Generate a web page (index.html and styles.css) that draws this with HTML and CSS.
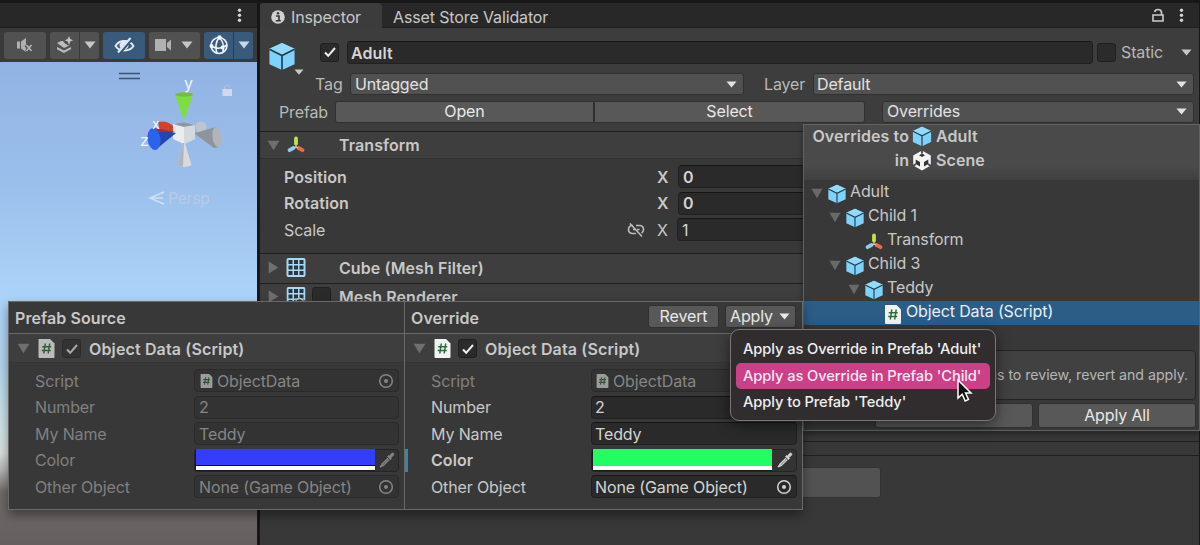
FILE: index.html
```html
<!DOCTYPE html>
<html lang="en">
<head>
<meta charset="utf-8">
<title>Inspector</title>
<link rel="stylesheet" href="styles.css">
</head>
<body>
<svg class="defs" aria-hidden="true">
  <symbol id="cube" viewBox="0 0 28 30">
    <path d="M14 1 27 7v16L14 29 1 23V7z" fill="#7fd2fb"/>
    <path d="M14 1 27 7 14 13.500 1 7z" fill="#93dbfd"/>
    <path d="M1 7.500 14 14l13-6.500M14 14v15" fill="none" stroke="#263c48" stroke-width="1.700"/>
  </symbol>
  <symbol id="axes" viewBox="0 0 18 18">
    <g stroke-width="3.800" stroke-linecap="round"><path d="M9 2.500v5" stroke="#bfe34f"/><path d="M6.500 12 2.500 14.200" stroke="#8fcbef"/><path d="m11.500 12 4 2.200" stroke="#ea6a45"/></g>
    <path d="M9 9v2M9 11l-2 1M9 11l2 1" stroke="#e8e0c0" stroke-width="1"/>
  </symbol>
  <symbol id="script" viewBox="0 0 17 19">
    <path d="M1 0h11l4.500 4.500V18q0 1-1 1h-14Q.5 19 .5 18V1q0-1 .5-1z" fill="#f1f4f2"/>
    <path d="M7.300 4.500 5.800 14.500M11.700 4.500l-1.500 10M4.200 7.700h9M3.700 11.400h9" stroke="#2d6b3c" stroke-width="1.500" fill="none"/>
  </symbol>
  <symbol id="down" viewBox="0 0 12 8" preserveAspectRatio="none"><path d="M.5.500h11L6 7.500z" fill="currentColor"/></symbol>
  <symbol id="check" viewBox="0 0 14 12"><path d="m2 6.500 3.200 3.300L12 2" fill="none" stroke="currentColor" stroke-width="2"/></symbol>
  <symbol id="target" viewBox="0 0 16 16"><circle cx="8" cy="8" r="6.300" fill="none" stroke="currentColor" stroke-width="1.500"/><circle cx="8" cy="8" r="2" fill="currentColor"/></symbol>
  <symbol id="picker" viewBox="0 0 16 16">
    <path d="m8.500 4.500 1-1 .8.800 2-2.500q1-1.300 2.200-.4.900 1.100-.3 2.200l-2.400 2 .8.900-1.100 1.100z" fill="currentColor" stroke="currentColor" stroke-width=".8"/>
    <path d="m9 6.200-6 6-.7 2 2-.8 6-6" fill="none" stroke="currentColor" stroke-width="1.400"/><path d="m1 15 2-2" stroke="currentColor" stroke-width="1.500"/>
  </symbol>
  <symbol id="grid" viewBox="0 0 19 19">
    <rect width="19" height="19" rx="2" fill="#a9d9f2"/>
    <g fill="#263640"><path d="M2 2h4v4H2zM7.500 2h4v4h-4zM13 2h4v4h-4zM2 7.500h4v4H2zM7.500 7.500h4v4h-4zM13 7.500h4v4h-4zM2 13h4v4H2zM7.500 13h4v4h-4zM13 13h4v4h-4z"/></g>
  </symbol>
  <symbol id="dots" viewBox="0 0 5 15"><g fill="#d2d2d2"><circle cx="2.500" cy="2.300" r="1.700"/><circle cx="2.500" cy="7.300" r="1.700"/><circle cx="2.500" cy="12.300" r="1.700"/></g></symbol>
</svg>

<div class="editor">
  <section class="scene">
    <div class="scene-tabs"><svg width="5" height="15"><use href="#dots"/></svg></div>
    <div class="toolbar">
      <span class="tool w-audio"><svg width="18" height="16" viewBox="0 0 18 16"><path d="M1 4.500h3v7H1zM5 4.500l5-3.500v14l-5-3.500z" fill="#b0b0b0"/><path d="m10 8 6 7M16.500 8l-6 7" stroke="#4f4f4f" stroke-width="3.500"/><path d="m10.500 8 5 6M15.500 8l-5 6" stroke="#b5b5b5" stroke-width="1.600"/></svg></span>
      <span class="split w-fx"><span class="tool"><svg width="18" height="18" viewBox="0 0 18 18"><path d="M13 0l1.200 3 3 1.300-3 1.200L13 9l-1.300-3.500-3-1.200 3-1.300z" fill="#c4c4c4"/><path d="m1 7 4-2h2l1.500 2L12 9.500l2-.3-6 2.800zM1 11l7 3.500 7-3.500v2L8 17l-7-3.800z" fill="#bdbdbd"/></svg></span><span class="tool arrow"><svg width="12" height="8"><use href="#down"/></svg></span></span>
      <span class="tool on w-eye"><svg width="21" height="17" viewBox="0 0 21 17"><path d="M1.500 9q3-5 9-5t9 5q-3 4.500-9 4.500t-9-4.500z" fill="none" stroke="#e3edf7" stroke-width="1.800"/><ellipse cx="10" cy="8.500" rx="4.500" ry="4" fill="#e3edf7"/><path d="m5 16 13-15" stroke="#3a5878" stroke-width="4"/><path d="M4 15.500 16.500 1" stroke="#e3edf7" stroke-width="2"/></svg></span>
      <span class="tool w-cam"><svg width="17" height="12" viewBox="0 0 17 12"><path d="M0 0h11v12H0zM12 4l4-3.500v11L12 8z" fill="#b0b0b0"/></svg><svg class="gap" width="12" height="8"><use href="#down"/></svg></span>
      <span class="split w-gizmo"><span class="tool on"><svg width="20" height="20" viewBox="0 0 20 20"><g fill="none" stroke="#e8f2fb" stroke-width="1.600"><circle cx="10" cy="10.500" r="8"/><path d="M10 2.500q-5 7-2 16M10 2.500q6 5 4 14.500M2 11q8 5 16-1"/></g><g fill="#eef6fd"><circle cx="10.500" cy="2.500" r="2.200"/><circle cx="2.500" cy="11" r="2"/><circle cx="13.500" cy="12.500" r="2"/></g></svg></span><span class="tool on arrow"><svg width="12" height="8"><use href="#down"/></svg></span></span>
    </div>
    <div class="viewport">
      <svg width="257" height="240" viewBox="0 62 257 240" class="gizmo">
        <path d="M119 73.500h21M119 78.500h21" stroke="#3f5270" stroke-width="1.300"/>
        <path d="M224.500 89v-2q0-1.500 3-1.500 2.500 0 2.500 1.500" stroke="#b3c3dc" fill="none"/><rect x="222.500" y="89" width="9.500" height="7" fill="#dee4ed" opacity=".8"/>
        <path d="M158 122q9-2 15 4v8l-12 2z" fill="#d44129"/>
        <circle cx="201" cy="127" r="5.500" fill="#bfc5ce"/>
        <path d="m173 124 11-2 11 3v14l-11 5-11-5z" fill="#ebecee"/><path d="m184 127 11-2v14l-11 5z" fill="#d5d8dd"/><path d="m173 124 11-2 11 3-11 2z" fill="#8e97a5"/>
        <path d="M175 94q9-4 18 0l-8 24h-2z" fill="#7ddf3e"/><ellipse cx="184" cy="94.500" rx="9" ry="2" fill="#79b84a"/>
        <path d="M183 143h2l6.500 22q-7 4-14.500 0z" fill="#d8dadd"/><path d="M183 143h1l-1 24q-4 0-6-2z" fill="#afb5bf"/>
        <path d="M195 133l21-6q7 8 3 20l-5 1-19-14z" fill="#8e9499"/><ellipse cx="217" cy="137" rx="4.500" ry="10" transform="rotate(-8 217 137)" fill="#b0b5b9"/>
        <path d="M176 133l-23-5-1 21 4 .5z" fill="#2046b5"/><path d="M176 132l-22-4 3 4z" fill="#a92a35"/><ellipse cx="154" cy="139" rx="6.500" ry="11" transform="rotate(-8 154 139)" fill="#2c63ea"/>
        <path d="m164 192-14 6 14 6M151 198h12" stroke="#cfe0f4" stroke-width="1.500" fill="none"/>
        <g class="axis"><text x="184" y="88.500">y</text><text x="152" y="129">x</text><text x="140" y="146">z</text></g>
        <text x="168" y="203.500" class="persp">Persp</text>
      </svg>
    </div>
  </section>

  <section class="inspector">
    <div class="tabs">
      <div class="tab active"><svg width="14" height="14" viewBox="0 0 14 14"><circle cx="7" cy="7" r="6.800" fill="#d0d0d0"/><path d="M5 6h3v4.500M4.800 10.800h5" stroke="#333" stroke-width="1.600" fill="none"/><circle cx="7" cy="3.300" r="1.200" fill="#333"/></svg><span>Inspector</span></div>
      <div class="tab second"><span>Asset Store Validator</span></div>
      <div class="tab-tools"><svg width="12" height="14" viewBox="0 0 12 14"><path d="M1 7h10v6H1zM9.500 7V4Q9 1.500 6 1.500T2.800 4" fill="none" stroke="#ccc" stroke-width="1.600"/></svg><svg width="5" height="15"><use href="#dots"/></svg></div>
    </div>
    <div class="object-head">
      <div class="row name-row"><div class="icon-cell"><svg class="bigcube" width="28" height="29"><use href="#cube"/></svg><svg class="cubearrow" width="10" height="6"><use href="#down"/></svg></div><span class="checkbox"><svg width="14" height="12"><use href="#check"/></svg></span><div class="field name"><b>Adult</b></div><span class="checkbox empty"></span><span class="static">Static</span><svg width="11" height="7"><use href="#down"/></svg></div>
      <div class="row tag-row"><span class="label">Tag</span><div class="dropdown tag"><span>Untagged</span><svg width="11" height="7"><use href="#down"/></svg></div><span class="label layer">Layer</span><div class="dropdown grow"><span>Default</span><svg width="11" height="7"><use href="#down"/></svg></div></div>
      <div class="row prefab-row"><span class="label">Prefab</span><div class="button open">Open</div><div class="button select">Select</div><div class="dropdown overrides"><span>Overrides</span><svg width="11" height="7"><use href="#down"/></svg></div></div>
    </div>
    <div class="comp-head first"><svg class="fold" width="13" height="11"><use href="#down"/></svg><svg class="cicon" width="20" height="18"><use href="#axes"/></svg><b class="ctitle">Transform</b></div>
    <div class="comp-body">
      <div class="prop"><b class="pl">Position</b><span class="link"></span><b class="x">X</b><div class="field"><b>0</b></div></div>
      <div class="prop"><b class="pl">Rotation</b><span class="link"></span><b class="x">X</b><div class="field"><b>0</b></div></div>
      <div class="prop"><span class="pl">Scale</span><span class="link"><svg width="18" height="14" viewBox="0 0 18 14"><path d="M6 2.500H5Q1.500 3 1.500 6.500T5 10.500h4M9 2.500h4q3.500.500 3.500 4 0 2.500-2 3.500M6 6.500h2M10 6.500h2.500M3 .5l12 13" fill="none" stroke="#bdbdbd" stroke-width="1.600"/></svg></span><span class="x">X</span><div class="field scale">1</div></div>
    </div>
    <div class="comp-head mf"><svg class="fold side" width="13" height="11"><use href="#down"/></svg><svg class="cicon" width="19" height="19"><use href="#grid"/></svg><b class="ctitle">Cube (Mesh Filter)</b></div>
    <div class="comp-head last"><svg class="fold side" width="13" height="11"><use href="#down"/></svg><svg class="cicon" width="19" height="19" viewBox="0 0 19 19"><use href="#grid"/><path d="M8 14q5-6 11 0l-2 5H9z" fill="#333"/><path d="M9 13.500q4-4 8 0" stroke="#c8c8c8" stroke-width="1.600" fill="none"/></svg><span class="checkbox mr"></span><b class="ctitle mr-title">Mesh Renderer</b></div>
    <div class="strip"></div>
    <div class="add-wrap"><div class="button add"></div></div>
  </section>
</div>

<aside class="overrides-popup">
  <header>
    <div class="oh"><b class="oh-l">Overrides to</b><svg width="20" height="21"><use href="#cube"/></svg><b>Adult</b></div>
    <div class="oh"><b class="oh-l">in</b><svg width="20" height="21" viewBox="0 0 20 21"><path d="M10 .5 18.800 5.500v10L10 20.500l-8.800-5v-10z" fill="#f4f4f4"/><path d="m10 3.500 3 1.800-3 1.800-3-1.800zM3.700 9.500l4.300 2.400v4.600L3.700 14zM16.300 9.500 12 11.900v4.600l4.300-2.500z" fill="#343434"/><path d="M10 0v3.500M1 16l3-2M19 16l-3-2" stroke="#484848" stroke-width="1.800"/></svg><b>Scene</b></div>
  </header>
  <div class="tree">
    <div class="node d0"><svg class="tw" width="12" height="11"><use href="#down"/></svg><svg class="ic" width="20" height="20"><use href="#cube"/></svg><span>Adult</span></div>
    <div class="node d1"><svg class="tw" width="12" height="11"><use href="#down"/></svg><svg class="ic" width="20" height="20"><use href="#cube"/></svg><span>Child 1</span></div>
    <div class="node d2"><i class="tw"></i><svg class="ic" width="20" height="18"><use href="#axes"/></svg><span>Transform</span></div>
    <div class="node d1"><svg class="tw" width="12" height="11"><use href="#down"/></svg><svg class="ic" width="20" height="20"><use href="#cube"/></svg><span>Child 3</span></div>
    <div class="node d2"><svg class="tw" width="12" height="11"><use href="#down"/></svg><svg class="ic" width="20" height="20"><use href="#cube"/></svg><span>Teddy</span></div>
    <div class="node d3 selected"><i class="tw"></i><svg class="ic" width="20" height="19"><use href="#script"/></svg><span>Object Data (Script)</span></div>
  </div>
  <div class="help">ns to review, revert and apply.</div>
  <div class="actions"><div class="button"></div><div class="button">Apply All</div></div>
</aside>

<aside class="compare">
  <div class="col source">
    <header><b class="ps">Prefab Source</b></header>
    <div class="ch"><svg class="fold" width="13" height="11"><use href="#down"/></svg><svg class="sc" width="17" height="19"><use href="#script"/></svg><span class="checkbox"><svg width="14" height="12"><use href="#check"/></svg></span><b class="odt">Object Data (Script)</b></div>
    <div class="props">
      <div class="p"><span>Script</span><div class="field obj"><svg width="13" height="14"><use href="#script"/></svg><span class="od">ObjectData</span><svg class="tg" width="16" height="16"><use href="#target"/></svg></div></div>
      <div class="p"><span>Number</span><div class="field">2</div></div>
      <div class="p"><span>My Name</span><div class="field">Teddy</div></div>
      <div class="p"><span>Color</span><div class="field color"><i class="swatch blue"></i><svg width="16" height="16"><use href="#picker"/></svg></div></div>
      <div class="p"><span>Other Object</span><div class="field obj"><span class="none">None (Game Object)</span><svg class="tg" width="16" height="16"><use href="#target"/></svg></div></div>
    </div>
  </div>
  <div class="col target">
    <header><b class="ov">Override</b><div class="button">Revert</div><div class="button apply"><span>Apply</span><svg width="11" height="7"><use href="#down"/></svg></div></header>
    <div class="ch"><svg class="fold" width="13" height="11"><use href="#down"/></svg><svg class="sc" width="17" height="19"><use href="#script"/></svg><span class="checkbox"><svg width="14" height="12"><use href="#check"/></svg></span><b class="odt">Object Data (Script)</b></div>
    <div class="props">
      <div class="p off"><span>Script</span><div class="field obj"><svg width="13" height="14"><use href="#script"/></svg><span class="od">ObjectData</span></div></div>
      <div class="p"><span>Number</span><div class="field">2</div></div>
      <div class="p"><span>My Name</span><div class="field">Teddy</div></div>
      <div class="p changed"><b>Color</b><div class="field color"><i class="swatch green"></i><svg width="16" height="16"><use href="#picker"/></svg></div></div>
      <div class="p"><span>Other Object</span><div class="field obj"><span class="none">None (Game Object)</span><svg class="tg" width="16" height="16"><use href="#target"/></svg></div></div>
    </div>
  </div>
</aside>

<nav class="menu">
  <div class="item">Apply as Override in Prefab 'Adult'</div>
  <div class="item hot">Apply as Override in Prefab 'Child'</div>
  <div class="item">Apply to Prefab 'Teddy'</div>
</nav>
<svg class="cursor" width="18" height="26" viewBox="0 0 18 26"><path d="M2 2v18l4.200-3.800 3 6.800 3.300-1.500-3-6.500H15z" fill="#111" stroke="#fff" stroke-width="1.500"/></svg>
</body>
</html>
```
FILE: styles.css
```css
* { box-sizing: border-box; }
body { margin: 0; width: 1200px; height: 545px; overflow: hidden; position: relative; background: #191919; font: 16px/20px Inter, sans-serif; letter-spacing: -.13px; color: #c8c8c8; white-space: nowrap; }
b { font-weight: 600; letter-spacing: .08px; }
svg { display: block; flex: none; }
.defs { position: absolute; width: 0; height: 0; }
.editor { display: flex; gap: 3px; height: 545px; padding: 3px 2px 0 0; background: #171717; }

/* Scene view */
.scene { width: 257px; display: flex; flex-direction: column; flex: none; }
.scene-tabs { height: 25px; background: #282828; display: flex; justify-content: flex-end; align-items: center; padding-right: 15px; border-bottom: 1px solid #1b1b1b; }
.toolbar { height: 34px; background: #3a3a3a; display: flex; align-items: center; gap: 4px; padding: 0 4px 0 4px; }
.tool { height: 27px; background: #515151; border-radius: 3px; display: flex; align-items: center; justify-content: center; color: #c6c6c6; }
.on { background: #3a5a7c; color: #c8d8ec; }
.split { display: flex; gap: 1px; }
.split .tool:first-child { flex: 1; border-radius: 3px 0 0 3px; }
.arrow { width: 19px; border-radius: 0 3px 3px 0; }
.w-audio { width: 42px; }
.w-fx { width: 49px; }
.w-eye { width: 42px; }
.w-cam { width: 51px; padding-right: 2px; }
.gap { margin-left: 9px; }
.w-gizmo { width: 49px; }
.viewport { flex: 1; background: linear-gradient(#91b3e4, #9bbfeb 25%, #abd3f8 48%, #b2d4ed 63%, #cfe3e7 76%, #d9dedb 81%, #b4b5b4 84.500%, #706a69 89%, #665f5f); }
.axis { fill: #f0f5fa; font: 16px Inter, sans-serif; }
.axis text:nth-child(2) { font-size: 14px; }
.persp { fill: #b9cbe4; font: 15.500px Inter, sans-serif; }

/* Inspector */
.inspector { flex: 1; background: #383838; display: flex; flex-direction: column; }
.tabs { height: 25px; background: #282828; display: flex; border-bottom: 1px solid #202020; }
.tab { display: flex; align-items: center; gap: 6px; padding: 2px 11px 0; }
.tab.active { width: 122px; height: 25px; background: #3c3c3c; border-radius: 4px 4px 0 0; }
.tab.second { padding-top: 3px; }
.tab-tools { margin-left: auto; display: flex; align-items: center; gap: 15px; padding-right: 15px; }
.object-head { height: 103px; background: #3d3d3d; padding: 13px 5px 0 9px; }
.row { display: flex; height: 22px; align-items: center; }
.name-row { padding-right: 4px; margin-right: -2px; }
.icon-cell { width: 51px; height: 22px; display: flex; align-items: flex-start; margin-left: -1px; margin-right: 1px; }
.cubearrow { margin: 28px 0 0 -2px; }
.bigcube { margin-top: 1px; }
.checkbox { width: 19px; height: 19px; background: #2b2b2b; border: 1px solid #202020; border-radius: 3px; display: flex; align-items: center; justify-content: center; color: #eee; flex: none; }
.checkbox.empty { margin-left: 4px; }
.field { height: 23px; background: #2a2a2a; border: 1px solid #202020; border-top-color: #161616; border-radius: 4px; display: flex; align-items: center; padding-left: 4px; color: #d4d4d4; }
.name { width: 746px; margin-left: 8px; }
.name b { margin: 1px 0 0 -1px; }
.static { flex: 1; margin-left: 5px; color: #b8b8b8; }
.tag-row { margin-top: 10px; }
.label { color: #b8b8b8; }
.tag-row .label:first-child { width: 81px; padding-left: 46px; }
.tag-row .label.layer { width: 69px; padding-left: 20px; }
.dropdown { height: 22px; background: #515151; border: 1px solid #303030; border-radius: 3px; display: flex; align-items: center; justify-content: space-between; padding: 0 6px 0 4px; color: #e2e2e2; }
.dropdown.tag { width: 394px; }
.grow { flex: 1; padding-left: 3px; }
.prefab-row { margin-top: 6px; }
.prefab-row .label { width: 66px; padding-left: 10px; }
.button { height: 22px; background: #585858; border-radius: 3px; border: 1px solid #303030; display: flex; align-items: center; justify-content: center; color: #e8e8e8; }
.open { width: 259px; border-radius: 3px 0 0 3px; }
.select { width: 271px; border-radius: 0 3px 3px 0; }
.overrides { width: 312px; margin-left: 17px; }
.prefab-row .button, .prefab-row .dropdown { padding-bottom: 2px; }
.comp-head { height: 30px; background: #3e3e3e; border-top: 1px solid #1f1f1f; display: flex; align-items: center; padding-left: 7px; flex: none; }
.comp-head.first { height: 28px; border-bottom: 1px solid #303030; }
.comp-head.mf { padding-bottom: 2px; }
.fold { color: #6f6f6f; }
.side { transform: rotate(-90deg); }
.comp-head .cicon { width: 20px; margin-left: 6px; margin-right: 1px; }
.ctitle { margin-left: 32px; }
.comp-body { height: 94px; padding: 6px 0 0 25px; display: flex; flex-direction: column; gap: 3.500px; margin-left: -1px; }
.prop { display: flex; align-items: center; height: 23px; }
.pl { width: 343px; }
.link { width: 30px; }
.x { width: 21px; }
.prop .field { width: 300px; }
.prop .field.scale { margin-left: -1px; }
.mr { margin-left: 5px; }
.mr-title { margin-left: 8px; }
.comp-head.last { height: 158px; align-items: flex-start; padding-top: 3px; background: linear-gradient(#3e3e3e 30px, #383838 30px); }
.last .fold { margin-top: 4px; }
.strip { height: 15px; border-top: 1px solid #1f1f1f; border-bottom: 1px solid #1f1f1f; flex: none; }
.add-wrap { padding: 11px 0 0 340px; }
.add { width: 281px; height: 31px; border-color: #333; background: #525252; }

/* Overrides dropdown */
.overrides-popup { position: absolute; left: 803px; top: 124px; width: 397px; height: 307px; background: #383838; border: 1px solid #626262; box-shadow: 0 3px 6px rgba(0,0,0,.35); }
.overrides-popup header { height: 55px; background: linear-gradient(#4a4a4a 75%, #404040); }
.oh { display: flex; align-items: center; height: 24px; margin-bottom: 0; padding-bottom: 2px; }
.oh-l { width: 105px; text-align: right; }
.oh svg { margin: 0 4px 0 3px; }
.tree { padding-top: 1px; }
.node { display: flex; align-items: center; height: 24px; padding-left: 7px; }
.tw { width: 12px; color: #696969; }
.ic { margin: 2px 3px 0 4px; }
.node span { margin-top: -4px; }
.d1 { padding-left: 25px; }
.d2 { padding-left: 44px; }
.d3 { padding-left: 63px; }
.selected { background: #2c5d87; color: #e8eef5; }
.help { height: 50px; margin: 25px 3px 0; background: #414141; border: 1px solid #242424; border-radius: 4px; display: flex; align-items: center; justify-content: flex-end; padding-right: 7px; font-size: 14.200px; letter-spacing: -.04px; color: #b5b5b5; }
.actions { display: flex; gap: 5px; padding: 3px 3px 0 71px; }
.actions .button { flex: 1; height: 25px; padding-bottom: 1px; }

/* Source and override comparison */
.compare { position: absolute; left: 8px; top: 301px; width: 795px; height: 209px; border: 1px solid #6a6a6a; background: #383838; display: flex; box-shadow: 0 5px 10px rgba(0,0,0,.4); }
.col { flex: 1; min-width: 0; }
.target { border-left: 1px solid #696969; flex: 0 0 398px; }
.col header { height: 32px; display: flex; align-items: center; padding: 1px 6px 0 6px; border-bottom: 1px solid #696969; }
.ov { flex: 1; }
.target header .button { width: 71px; height: 23px; margin: -4px 0 0 6px; }
.target header .apply { justify-content: space-between; padding: 0 5px 0 4px; }
.ch { height: 29px; background: #3e3e3e; border-bottom: 1px solid #343434; display: flex; align-items: center; padding: 1px 0 0 8px; }
.sc { margin: 0 7px 0 8px; }
.ch .odt { margin-left: 8px; letter-spacing: .14px; }
.props { padding: 6px 5px 0 26px; display: flex; flex-direction: column; gap: 3.500px; }
.p { display: flex; align-items: center; height: 23px; }
.p > :first-child { flex: 1; }
.p .field { width: 205px; }
.target .p .field { width: 206px; padding-left: 3px; }
.obj svg:first-child { margin-right: 4px; margin-left: 1px; }
.tg { margin-left: auto; margin-right: 4px; }
.p .field.color, .target .p .field.color { padding: 0 3px 0 0; justify-content: space-between; border-color: #242424; background: #333; }
.swatch { width: 180px; height: 22px; border: solid #1a1a1a; border-width: 0 0 1px 1px; }
.blue { background: linear-gradient(#333dff 16px, #111 16px 17px, #fff 17px); }
.green { background: linear-gradient(#21fd65 17px, #fff 17px); }
.source .p, .p.off { color: #808080; }
.source .field, .off .field { color: #858585; background: #333; border-color: #2a2a2a; }
.source .field svg:first-child, .off .field svg:first-child { opacity: .55; }
.source .sc { opacity: .7; }
.source .checkbox { background: #333; border-color: #2b2b2b; color: #aaa; }
.changed { margin-left: -26px; padding-left: 23px; border-left: 3px solid #3d83a8; }

/* Apply menu */
.menu { position: absolute; left: 730px; top: 329px; width: 266px; height: 92px; border: 1px solid #777; border-radius: 9px; background: #312d2f; box-shadow: 0 4px 14px rgba(0,0,0,.5); padding: 6px 5px; }
.item { height: 26.500px; display: flex; align-items: center; padding-left: 7px; font-size: 14.700px; letter-spacing: -.1px; font-weight: 500; color: #efefef; border-radius: 5px; }
.hot { background: #cb4086; color: #fde9f4; }
.cursor { position: absolute; left: 956px; top: 378px; }
```
